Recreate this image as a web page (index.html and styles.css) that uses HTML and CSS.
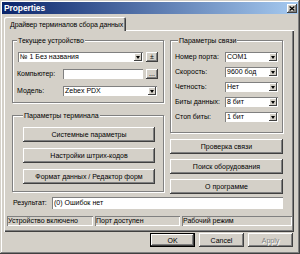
FILE: index.html
```html
<!DOCTYPE html>
<html>
<head>
<meta charset="utf-8">
<link rel="stylesheet" href="styles.css">
</head>
<body>
<div class="window">
  <div class="titlebar">
    <span class="title">Properties</span>
    <span class="close"><svg width="6" height="5" viewBox="0 0 6 5"><path d="M0.6 0.5L5.4 4.5M5.4 0.5L0.6 4.5" stroke="#000" stroke-width="1.3"/></svg></span>
  </div>
  <div class="content">
    <div class="tabs"><div class="tab">Драйвер терминалов сбора данных</div></div>
    <div class="panel">
      <div class="columns">
        <div class="col col-left">
          <fieldset class="group group-device">
            <legend class="legend-left">Текущее устройство</legend>
            <div class="row row-device">
              <div class="combo combo-device"><span class="combo-text">№ 1 Без названия</span><span class="drop"></span></div>
              <div class="btn btn-mini">±</div>
            </div>
            <div class="row">
              <span class="lbl lbl-left">Компьютер:</span>
              <div class="field field-comp"></div>
              <div class="btn btn-mini">...</div>
            </div>
            <div class="row">
              <span class="lbl lbl-left">Модель:</span>
              <div class="combo combo-model"><span class="combo-text">Zebex PDX</span><span class="drop"></span></div>
            </div>
          </fieldset>
          <fieldset class="group group-term">
            <legend class="legend-left">Параметры терминала</legend>
            <div class="btn btn-wide">Системные параметры</div>
            <div class="btn btn-wide">Настройки штрих-кодов</div>
            <div class="btn btn-wide">Формат данных / Редактор форм</div>
          </fieldset>
        </div>
        <div class="col col-right">
          <fieldset class="group group-comm">
            <legend class="legend-right">Параметры связи</legend>
            <div class="row"><span class="lbl lbl-right">Номер порта:</span><div class="combo combo-comm"><span class="combo-text">COM1</span><span class="drop"></span></div></div>
            <div class="row"><span class="lbl lbl-right">Скорость:</span><div class="combo combo-comm"><span class="combo-text">9600 бод</span><span class="drop"></span></div></div>
            <div class="row"><span class="lbl lbl-right">Четность:</span><div class="combo combo-comm"><span class="combo-text">Нет</span><span class="drop"></span></div></div>
            <div class="row"><span class="lbl lbl-right">Биты данных:</span><div class="combo combo-comm"><span class="combo-text">8 бит</span><span class="drop"></span></div></div>
            <div class="row"><span class="lbl lbl-right">Стоп биты:</span><div class="combo combo-comm"><span class="combo-text">1 бит</span><span class="drop"></span></div></div>
          </fieldset>
          <div class="btn-stack">
            <div class="btn btn-side">Проверка связи</div>
            <div class="btn btn-side">Поиск оборудования</div>
            <div class="btn btn-side">О программе</div>
          </div>
        </div>
      </div>
      <div class="result">
        <span class="lbl lbl-result">Результат:</span>
        <div class="field field-result"><span class="combo-text">(0) Ошибок нет</span></div>
      </div>
      <div class="status">
        <div class="status-cell cell-1">Устройство включено</div>
        <div class="status-cell cell-2">Порт доступен</div>
        <div class="status-cell cell-3">Рабочий режим</div>
      </div>
    </div>
    <div class="actions">
      <div class="btn btn-action btn-default">OK</div>
      <div class="btn btn-action">Cancel</div>
      <div class="btn btn-action btn-disabled">Apply</div>
    </div>
  </div>
</div>
</body>
</html>
```

FILE: styles.css
```css
* {
  box-sizing: border-box;
}

html,
body {
  margin: 0;
  padding: 0;
}

body {
  width: 300px;
  height: 254px;
  overflow: hidden;
  background: #d4d0c8;
  font-family: "Liberation Sans", Arial, sans-serif;
  font-size: 7px;
  color: #000;
}

.window {
  width: 300px;
  height: 254px;
  background: #d4d0c8;
  padding: 2px;
  display: flex;
  flex-direction: column;
  box-shadow: inset -1px -1px #404040, inset 1px 1px #d4d0c8, inset -2px -2px #808080, inset 2px 2px #fff;
}

.titlebar {
  height: 12px;
  flex: none;
  display: flex;
  align-items: center;
  justify-content: space-between;
  padding: 0 1px 0 2px;
  background: linear-gradient(to right, #0a246a, #a6caf0);
}

.title {
  color: #fff;
  font-weight: bold;
  font-size: 8.5px;
  letter-spacing: -0.1px;
  line-height: 12px;
}

.close {
  width: 10px;
  height: 9px;
  display: flex;
  align-items: center;
  justify-content: center;
  background: #d4d0c8;
  box-shadow: inset -1px -1px #404040, inset 1px 1px #fff, inset -2px -2px #808080;
}

.close svg {
  display: block;
}

.content {
  flex: 1;
  display: flex;
  flex-direction: column;
  padding: 3px 4px 0 2px;
}

.tabs {
  display: flex;
  height: 13px;
  flex: none;
}

.tab {
  position: relative;
  z-index: 1;
  height: 14px;
  padding: 0 3px 0 6px;
  display: flex;
  align-items: center;
  white-space: nowrap;
  letter-spacing: -0.1px;
  background: #d4d0c8;
  border-radius: 2px 2px 0 0;
  box-shadow: inset 1px 1px #fff, inset -1px 0 #404040, inset -2px 0 #808080;
}

.panel {
  height: 202px;
  flex: none;
  padding-top: 6px;
  display: flex;
  flex-direction: column;
  box-shadow: inset 1px 1px #fff, inset -1px -1px #404040, inset -2px -2px #808080;
}

.columns {
  display: flex;
  gap: 6px;
  padding: 0 11px 0 8px;
}

.col {
  display: flex;
  flex-direction: column;
}

.col-left {
  width: 152px;
}

.col-right {
  width: 113px;
}

.group {
  margin: 0;
  min-width: 0;
  border: 1px solid #808080;
  box-shadow: 1px 1px 0 #fff, inset 1px 1px 0 #fff;
  display: flex;
  flex-direction: column;
}

.group legend {
  padding: 0 1px;
  line-height: 9px;
  background: #d4d0c8;
}

.legend-left {
  margin-left: 0;
}

.legend-right {
  margin-left: 3px;
}

.group-device {
  padding: 7px 4px 6px 4px;
  gap: 7px;
}

.group-term {
  margin-top: 8px;
  padding: 7px 8px 7px 10px;
  gap: 6px;
}

.group-comm {
  padding: 7px 4px 10px 4px;
  gap: 5px;
}

.row {
  display: flex;
  align-items: center;
  height: 10px;
}

.row-device {
  padding-left: 1px;
  gap: 3px;
}

.lbl {
  white-space: nowrap;
  line-height: 10px;
}

.lbl-left {
  width: 46px;
  flex: none;
}

.lbl-right {
  width: 50px;
  flex: none;
}

.combo,
.field {
  height: 10px;
  background: #fff;
  display: flex;
  align-items: center;
  justify-content: space-between;
  box-shadow: inset 1px 1px #808080, inset -1px -1px #fff;
}

.combo-text {
  padding-left: 2px;
  white-space: nowrap;
  line-height: 10px;
}

.drop {
  width: 8px;
  height: 8px;
  margin-right: 1px;
  flex: none;
  display: flex;
  align-items: center;
  justify-content: center;
  background: #d4d0c8;
  box-shadow: inset -1px -1px #404040, inset 1px 1px #fff;
}

.drop::after {
  content: "";
  width: 0;
  height: 0;
  border-left: 2.5px solid transparent;
  border-right: 2.5px solid transparent;
  border-top: 3px solid #000;
}

.combo-device {
  width: 125px;
}

.field-comp {
  width: 80px;
}

.combo-model {
  width: 94px;
}

.combo-comm {
  width: 53px;
}

.btn {
  display: flex;
  align-items: center;
  justify-content: center;
  background: #d4d0c8;
  white-space: nowrap;
  box-shadow: inset -1px -1px #404040, inset 1px 1px #fff, inset -2px -2px #808080;
}

.btn-mini {
  width: 12px;
  height: 10px;
  margin-left: 3px;
  line-height: 10px;
}

.row-device .btn-mini {
  margin-left: 0;
}

.btn-wide {
  height: 15px;
}

.btn-stack {
  display: flex;
  flex-direction: column;
  gap: 5px;
  margin-top: 6px;
}

.btn-side {
  height: 15px;
}

.result {
  display: flex;
  align-items: center;
  margin-top: 3px;
  padding: 0 11px 0 9px;
  height: 12px;
}

.lbl-result {
  width: 39px;
  flex: none;
}

.field-result {
  flex: 1;
  height: 12px;
  justify-content: flex-start;
}

.status {
  display: flex;
  gap: 2px;
  margin-top: 7px;
  padding: 0 2px 0 3px;
  height: 10px;
}

.status-cell {
  height: 10px;
  line-height: 10px;
  padding-left: 1px;
  white-space: nowrap;
  overflow: hidden;
  box-shadow: inset 1px 1px #808080, inset -1px -1px #fff;
}

.cell-1 {
  width: 86px;
}

.cell-2 {
  width: 85px;
}

.cell-3 {
  flex: 1;
}

.actions {
  display: flex;
  justify-content: flex-end;
  gap: 4px;
  margin-top: 1px;
  padding-right: 1px;
}

.btn-action {
  width: 45px;
  height: 14px;
}

.btn-default {
  box-shadow: inset 0 0 0 1px #000, inset -2px -2px #404040, inset 2px 2px #fff, inset -3px -3px #808080;
}

.btn-disabled {
  color: #808080;
  text-shadow: 1px 1px 0 #fff;
}
```
